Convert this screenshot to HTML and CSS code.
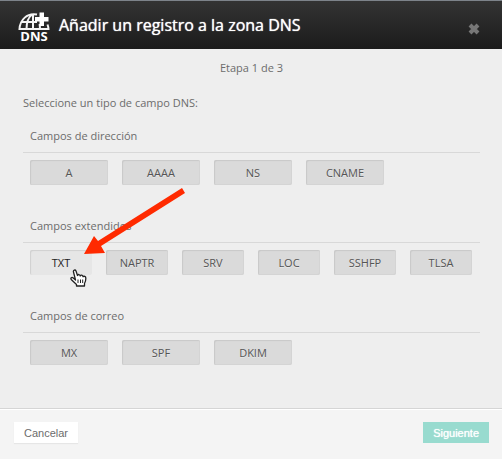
FILE: index.html
```
<!DOCTYPE html>
<html lang="es">
<head>
  <meta charset="UTF-8" />
  <meta name="viewport" content="width=device-width, initial-scale=1.0" />
  <title>Añadir un registro a la zona DNS</title>
  <link rel="stylesheet" href="styles.css">
</head>
<body>
  <div class="modal">
    <header class="modal-header">
      <svg class="logo" viewBox="0 0 32 34" width="32" height="34" aria-hidden="true">
        <g fill="none" stroke="#f4f4f4" stroke-width="2">
          <path d="M19 2.500C9 0.500 2 8 1.500 17H30.500C30.500 15.500 30 14 29.500 12.500" />
          <path d="M3 10H19M15 2V17M14 2.500C9.500 6 8.500 11 8.500 17M21.500 12C22 14 22 15 22 17" />
        </g>
        <path fill="#fff" d="M21.500 0.500H26V5H30.500V9.500H26V14H21.500V9.500H17V5H21.500Z" />
        <text class="logo-text" x="16" y="29" text-anchor="middle">DNS</text>
      </svg>
      <h1>Añadir un registro a la zona DNS</h1>
      <button class="close" type="button" aria-label="Cerrar">
        <svg viewBox="0 0 12 12" width="12" height="12">
          <path d="M2 2L10 10M10 2L2 10" stroke="currentColor" stroke-width="4" />
        </svg>
      </button>
    </header>

    <main class="modal-body">
      <p class="step">Etapa 1 de 3</p>
      <p class="intro">Seleccione un tipo de campo DNS:</p>

      <section class="group">
        <h2>Campos de dirección</h2>
        <div class="fields">
          <button type="button">A</button>
          <button type="button">AAAA</button>
          <button type="button">NS</button>
          <button type="button">CNAME</button>
        </div>
      </section>

      <section class="group">
        <h2>Campos extendidos</h2>
        <div class="fields fields-small">
          <button type="button" class="active">TXT</button>
          <button type="button">NAPTR</button>
          <button type="button">SRV</button>
          <button type="button">LOC</button>
          <button type="button">SSHFP</button>
          <button type="button">TLSA</button>
        </div>
        <svg class="arrow" viewBox="0 0 102 66" width="102" height="66" aria-hidden="true">
          <path fill="#ff2a00" d="M99 0L102 5L18 58L22 65L1 66L11 48L15 53Z" />
        </svg>
        <svg class="pointer" viewBox="0 0 17 18" width="17" height="18" aria-hidden="true">
          <path fill="#fff" stroke="#222" stroke-width="1.300" stroke-linejoin="round" d="M5.500 11L3.500 3C3 1 5.300 0.300 6 2L7.500 6.500C8 5 10 5.300 10.200 7C11 5.700 12.700 6 13 7.700C14 6.800 15.800 7.300 15.800 9C15.900 11.500 15.500 13 14.500 14.500V17H6.500V15.500L1.200 10.500C0.300 9 1.800 8 3 8.800Z" />
          <path fill="none" stroke="#222" d="M8 10.500V14M10.500 10.500V14M12.700 10.500V14" />
        </svg>
      </section>

      <section class="group">
        <h2>Campos de correo</h2>
        <div class="fields">
          <button type="button">MX</button>
          <button type="button">SPF</button>
          <button type="button">DKIM</button>
        </div>
      </section>
    </main>

    <footer class="modal-footer">
      <button type="button" class="cancel">Cancelar</button>
      <button type="button" class="next">Siguiente</button>
    </footer>
  </div>
</body>
</html>
```
FILE: styles.css
```
:root {
  --bg-color: #eeeeee;
  --footer-bg: #f4f4f4;
  --text-color: #6c6c6c;
  --field-bg: #dadada;
  --accent: #98dbcf;
}

* {
  box-sizing: border-box;
}

body {
  margin: 0;
  font-family: "Open Sans", sans-serif;
  font-size: 11px;
  line-height: 16px;
  color: var(--text-color);
  background: var(--footer-bg);
}

h1, h2, p {
  margin: 0;
}

button {
  border: none;
  padding: 0;
  cursor: pointer;
}

.modal {
  display: flex;
  flex-direction: column;
  min-height: 100vh;
  border-top: 1px solid #7d838a;
}

.modal-header {
  display: flex;
  align-items: center;
  height: 48px;
  padding: 0 22px 0 18px;
  background: linear-gradient(#333333, #1b1b1b);
  color: #ffffff;
}

.modal-header h1 {
  flex: 1;
  margin-left: 9px;
  font-size: 16px;
  font-weight: 500;
  line-height: 24px;
  text-shadow: 0 0 1px #ffffff;
}

.logo {
  margin-top: 8px;
}

.logo-text {
  font-size: 13px;
  font-weight: 700;
  fill: #ffffff;
}

.close {
  display: flex;
  margin-top: 8px;
  background: none;
  color: #777777;
}

.modal-body {
  flex: 1;
  padding: 11px 22px 0 23px;
  background: var(--bg-color);
}

.step {
  text-align: center;
}

.intro {
  margin-top: 19px;
}

.group {
  position: relative;
  padding-top: 17px;
  padding-bottom: 16px;
}

.group h2 {
  padding: 0 7px 8px;
  font-size: 11px;
  font-weight: 400;
  border-bottom: 1px solid #d8d8d8;
}

.fields {
  display: flex;
  flex-wrap: wrap;
  gap: 14px;
  padding: 7px 7px 0;
}

.fields button {
  width: 78px;
  height: 25px;
  font: inherit;
  color: #555555;
  text-shadow: 0 1px 0 #e8e8e8;
  background: var(--field-bg);
  border-radius: 2px;
  box-shadow: inset 1px 1px 1px #c8c8c8, inset -1px -1px 0 #d4d4d4;
}

.fields-small button {
  width: 62px;
}

.fields .active {
  color: #222222;
  background: #e6e6e6;
  box-shadow: inset 1px 1px 1px #d0d0d0;
}

/* pointer and arrow lie over the TXT button */
.arrow {
  position: absolute;
  left: 60px;
  top: -13px;
}

.pointer {
  position: absolute;
  left: 47px;
  top: 68px;
}

.modal-footer {
  display: flex;
  justify-content: space-between;
  height: 51px;
  padding: 13px 13px 0 14px;
  border-top: 1px solid #d5d5d5;
  box-shadow: inset 0 1px 0 #ffffff;
  background: var(--footer-bg);
}

.modal-footer button {
  height: 21px;
  padding: 0 10px;
  font-family: "Liberation Sans", Arial, sans-serif;
  font-size: 11px;
}

.cancel {
  color: var(--text-color);
  background: #ffffff;
  box-shadow: 0 1px 1px #e6e6e6;
}

.modal-footer .next {
  color: #ffffff;
  text-shadow: 0 0 1px #ffffff;
  background: var(--accent);
}
```
